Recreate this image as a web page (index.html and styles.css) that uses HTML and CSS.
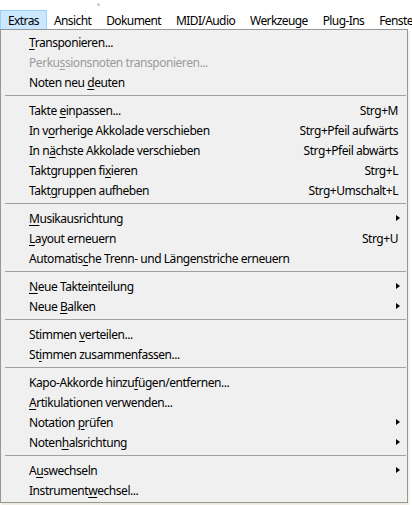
FILE: index.html
```html
<!DOCTYPE html>
<html lang="de">
<head>
<meta charset="utf-8">
<link rel="stylesheet" href="styles.css">
</head>
<body>
<div class="dot"></div>
<div class="menubar">
  <span class="mb-item active">Extras</span>
  <span class="mb-item">Ansicht</span>
  <span class="mb-item">Dokument</span>
  <span class="mb-item">MIDI/Audio</span>
  <span class="mb-item">Werkzeuge</span>
  <span class="mb-item">Plug-Ins</span>
  <span class="mb-item">Fenster</span>
</div>
<div class="dropdown">
  <div class="row"><span class="label"><u>T</u>ransponieren...</span></div>
  <div class="row disabled"><span class="label">Perku<u>s</u>sionsnoten transponieren...</span></div>
  <div class="row"><span class="label">Noten neu <u>d</u>euten</span></div>
  <div class="sep"></div>
  <div class="row"><span class="label">Takte <u>e</u>inpassen...</span><span class="key">Strg+M</span></div>
  <div class="row"><span class="label">In v<u>o</u>rherige Akkolade verschieben</span><span class="key">Strg+Pfeil aufwärts</span></div>
  <div class="row"><span class="label">In n<u>ä</u>chste Akkolade verschieben</span><span class="key">Strg+Pfeil abwärts</span></div>
  <div class="row"><span class="label">Taktgruppen fi<u>x</u>ieren</span><span class="key">Strg+L</span></div>
  <div class="row"><span class="label">Takt<u>g</u>ruppen aufheben</span><span class="key">Strg+Umschalt+L</span></div>
  <div class="sep"></div>
  <div class="row"><span class="label"><u>M</u>usikausrichtung</span><span class="arrow"></span></div>
  <div class="row"><span class="label"><u>L</u>ayout erneuern</span><span class="key">Strg+U</span></div>
  <div class="row"><span class="label">Automatis<u>c</u>he Trenn- und Längenstriche erneuern</span></div>
  <div class="sep"></div>
  <div class="row"><span class="label"><u>N</u>eue Takteinteilung</span><span class="arrow"></span></div>
  <div class="row"><span class="label">Neue <u>B</u>alken</span><span class="arrow"></span></div>
  <div class="sep"></div>
  <div class="row"><span class="label">Stimmen <u>v</u>erteilen...</span></div>
  <div class="row"><span class="label">St<u>i</u>mmen zusammenfassen...</span></div>
  <div class="sep"></div>
  <div class="row"><span class="label">Kapo-Akkorde hinzu<u>f</u>ügen/entfernen...</span></div>
  <div class="row"><span class="label"><u>A</u>rtikulationen verwenden...</span></div>
  <div class="row"><span class="label">Notation <u>p</u>rüfen</span><span class="arrow"></span></div>
  <div class="row"><span class="label">Noten<u>h</u>alsrichtung</span><span class="arrow"></span></div>
  <div class="sep"></div>
  <div class="row"><span class="label">A<u>u</u>swechseln</span><span class="arrow"></span></div>
  <div class="row"><span class="label">Instrument<u>w</u>echsel...</span></div>
</div>
</body>
</html>
```
FILE: styles.css
```css
html, body {
  margin: 0;
  padding: 0;
  background: #ffffff;
}
body {
  width: 412px;
  height: 505px;
  overflow: hidden;
  font-family: "Noto Sans", "Open Sans", sans-serif;
  font-size: 12px;
  letter-spacing: -0.45px;
  color: #000;
  position: relative;
}
.dot {
  position: absolute;
  left: 97px;
  top: 3px;
  width: 3px;
  height: 3px;
  border-radius: 50%;
  background: #c8c8c8;
}
.menubar {
  display: flex;
  padding-top: 10px;
  height: 19px;
  white-space: nowrap;
  overflow: hidden;
  letter-spacing: -0.6px;
}
.mb-item {
  display: flex;
  align-items: center;
  height: 18px;
  padding: 0 7px;
  border: 1px solid transparent;
  border-bottom: 0;
  margin-right: -1px;
}
.mb-item.active {
  background: #cce8ff;
  border-color: #99d1ff;
}
.dropdown {
  width: 406px;
  border: 1px solid #979797;
  background: #f0f0f0;
  padding: 2px 0;
  box-shadow: 1px 2px 2px rgba(200, 190, 150, 0.35);
}
.row {
  height: 20px;
  display: flex;
  align-items: center;
  padding: 0 9px 0 28px;
}
.label {
  flex: 1;
  white-space: nowrap;
}
.key {
  white-space: nowrap;
}
.disabled {
  color: #9b9b9b;
}
u {
  text-decoration-thickness: 1px;
  text-underline-offset: 2px;
}
.arrow {
  width: 0;
  height: 0;
  border-left: 4px solid #000;
  border-top: 3.5px solid transparent;
  border-bottom: 3.5px solid transparent;
  margin-right: -2px;
}
.sep {
  height: 1px;
  background: #a0a0a0;
  margin: 3px 1px 4px 4px;
}
```
